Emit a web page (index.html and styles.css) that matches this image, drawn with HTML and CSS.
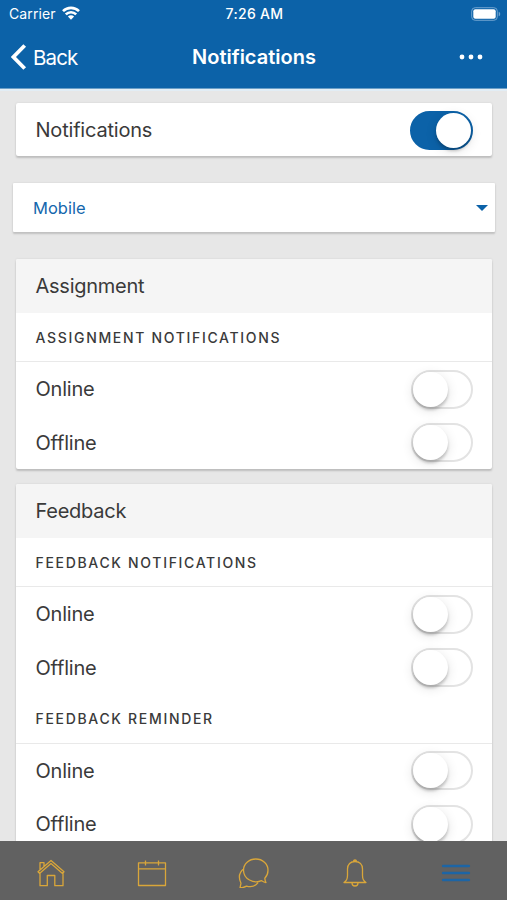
FILE: index.html
```html
<!DOCTYPE html>
<html lang="en">
<head>
<meta charset="utf-8">
<title>Notifications</title>
<link rel="stylesheet" href="styles.css">
</head>
<body>
<div class="app">
  <header class="top">
    <div class="status">
      <div class="carrier"><span>Carrier</span>
        <svg width="18" height="14" viewBox="0 0 18 14" fill="none" stroke="#fff" stroke-width="2.6"><path d="M1 5.200C5.500.7 12.500.7 17 5.200M3.800 8.400c2.900-2.900 7.500-2.900 10.400 0"/><path d="M9 13.700 5.900 10.600c1.700-1.700 4.500-1.700 6.200 0z" fill="#fff" stroke="none"/></svg>
      </div>
      <div class="time">7:26 AM</div>
      <div class="battery">
        <svg width="30" height="14" viewBox="0 0 30 14"><rect x=".7" y=".7" width="25.600" height="12.600" rx="3.500" fill="none" stroke="#6fa3cf" stroke-width="1"/><rect x="2.300" y="2.300" width="22.400" height="9.400" rx="2" fill="#fff"/><path d="M27.700 4.700c2 .6 2 4 0 4.600z" fill="#6fa3cf"/></svg>
      </div>
    </div>
    <nav class="nav">
      <a class="back"><svg width="16" height="26" viewBox="0 0 16 26" fill="none" stroke="#fff" stroke-width="3.800"><path d="M13.700 1.500 2.400 13l11.300 11.500"/></svg><span>Back</span></a>
      <h1>Notifications</h1>
      <div class="more"><svg width="24" height="6" viewBox="0 0 24 6" fill="#fff"><circle cx="3" cy="3" r="2.400"/><circle cx="12" cy="3" r="2.400"/><circle cx="21" cy="3" r="2.400"/></svg></div>
    </nav>
  </header>
  <main class="content">
    <section class="card main-card"><div class="row"><span>Notifications</span><i class="toggle on"></i></div></section>
    <div class="select"><span>Mobile</span><svg width="12" height="6" viewBox="0 0 12 6"><path d="M0 0h12L6 6z" fill="#0c62a8"/></svg></div>
    <section class="card assignment">
      <h2>Assignment</h2>
      <h3>ASSIGNMENT NOTIFICATIONS</h3>
      <div class="row"><span>Online</span><i class="toggle"></i></div>
      <div class="row"><span>Offline</span><i class="toggle"></i></div>
    </section>
    <section class="card feedback">
      <h2>Feedback</h2>
      <h3>FEEDBACK NOTIFICATIONS</h3>
      <div class="row"><span>Online</span><i class="toggle"></i></div>
      <div class="row"><span>Offline</span><i class="toggle"></i></div>
      <h3>FEEDBACK REMINDER</h3>
      <div class="row"><span>Online</span><i class="toggle"></i></div>
      <div class="row"><span>Offline</span><i class="toggle"></i></div>
    </section>
  </main>
  <footer class="tabs">
    <a><svg width="32" height="32" viewBox="0 0 32 32"><path d="M3 15.800 16 4.500l13 11.300-1.500 1.600L16 7.500 4.500 17.400zM5 17v12.700h7.300V19.500h7.500v10.200H28V17M5 13.500V6.700h4v3.500"/></svg></a>
    <a><svg width="32" height="32" viewBox="0 0 32 32"><path d="M2.500 6.800h27v22.700h-27zM2.500 12.800h27M9.500 4.500v5M22.500 4.500v5"/></svg></a>
    <a><svg width="32" height="32" viewBox="-1.5 0 32 32"><path d="M27.500 26.500c-2 .1-3-.7-4.500-1.800-8 3.400-18-1.800-18-10.500C5 7.800 10.500 3 17.300 3s12.200 4.800 12.200 11.200c0 3.500-1.300 6-3.200 8 .2 1.500.2 2.800 1.200 4.300zM5.500 12.500C-.2 17 .2 22.500 2.500 27.200L1.500 32c3 0 4.500-.8 6.500-1.900 4 1.200 8.500.6 11.500-3.500"/></svg></a>
    <a><svg width="32" height="32" viewBox="0 0 32 32"><path d="M5 26.500c2.500-1.500 3.500-3 3.500-7V13c0-4.500 3-7.500 7.500-7.500s7.500 3 7.500 7.500v6.500c0 4 1 5.500 3.500 7zM14.700 5.500c-.3-2.200 2.900-2.200 2.600 0M13 27c0 4 6 4 6 0"/></svg></a>
    <a class="active"><svg width="32" height="32" viewBox="0 0 32 32"><path d="M3.200 10h25.600M3.200 17h25.600M3.200 24h25.600"/></svg></a>
  </footer>
</div>
</body>
</html>
```

FILE: styles.css
```css
* { box-sizing: border-box; }
body { margin: 0; font-family: Inter, "Liberation Sans", sans-serif; color: #3a3a3a; background: #e7e7e7; }
.app { width: 507px; height: 900px; display: flex; flex-direction: column; overflow: hidden; }
.top { height: 91px; flex: none; background: #0c62a8; color: #fff; border-bottom: 2px solid #e2edf5; box-shadow: inset 0 -1px #6b9fc8; }
.status { height: 27px; display: grid; grid-template-columns: 1fr 1fr 1fr; align-items: center; font-size: 14px; padding: 0 7px 0 9px; }
.carrier { display: flex; align-items: center; gap: 6px; letter-spacing: .1px; }
.carrier svg { margin-top: -1px; }
.time { text-align: center; font-weight: 500; font-size: 14px; letter-spacing: .3px; }
.battery { display: flex; justify-content: flex-end; margin-right: -1px; }
.nav { height: 60px; display: grid; grid-template-columns: 1fr 1fr 1fr; align-items: center; padding: 0 24px 0 11px; }
.back { display: flex; align-items: center; gap: 6px; font-size: 20.500px; letter-spacing: -.85px; }
h1 { margin: 0 0 0 14px; text-align: center; font-size: 20px; font-weight: 600; letter-spacing: 0; white-space: nowrap; }
.more { display: flex; justify-content: flex-end; }
.content { flex: 1; min-height: 0; overflow: hidden; padding: 12px 15px 0 16px; }
.card { background: #fff; border-radius: 2px; box-shadow: 0 2px 2px #bdbdbd, 0 0 2px #ccc; overflow: hidden; }
.row { height: 53.500px; padding: 1px 19.500px 0; display: flex; align-items: center; justify-content: space-between; font-size: 20px; letter-spacing: -.2px; }
.select { height: 49px; margin: 27px -3px 27px; padding: 0 7px 0 20px; background: #fff; border-radius: 1px; box-shadow: 0 2px 2px #c0c0c0, 0 0 2px #ccc; display: flex; align-items: center; justify-content: space-between; color: #1467ad; font-size: 16.500px; }
.main-card { height: 53px; }
.assignment { height: 210px; margin-bottom: 15px; }
h2 { height: 53.500px; margin: 0; padding-left: 19.500px; background: #f5f5f5; display: flex; align-items: center; font-size: 20px; font-weight: 400; letter-spacing: -.25px; }
h3 { height: 49.500px; margin: 0; padding: 1px 0 0 19.500px; border-bottom: 1px solid #e9e9e9; display: flex; align-items: center; font-size: 14px; font-weight: 450; letter-spacing: 1.680px; }
.toggle { width: 62px; height: 39px; border: 2px solid #e3e3e3; border-radius: 20px; display: flex; align-items: center; }
.toggle::before { content: ""; width: 35px; height: 35px; border-radius: 50%; background: #fff; box-shadow: 0 3px 3px rgba(0,0,0,.2), 0 3px 12px rgba(0,0,0,.12); }
.toggle.on { width: 63px; background: #0c62a8; border-color: #0c62a8; justify-content: flex-end; }
.tabs { height: 59px; flex: none; background: #616161; display: grid; grid-template-columns: repeat(5, 1fr); align-items: center; justify-items: center; padding-top: 2px; }
.tabs a { display: flex; }
.tabs svg { fill: none; stroke: #d9a63a; stroke-width: 1.300; stroke-linejoin: round; }
.tabs .active svg { stroke: #1d65a5; stroke-width: 2.600; stroke-linecap: round; }
```
